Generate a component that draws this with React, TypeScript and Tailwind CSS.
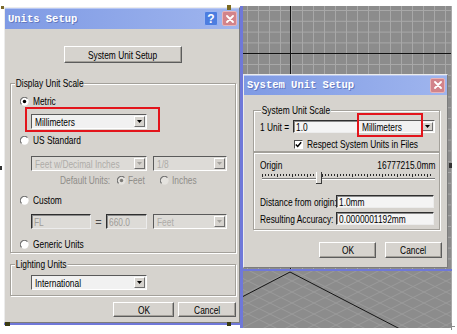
import React from "react";

const sans = "font-['Liberation_Sans',Arial,sans-serif]";

// the reference UI font is a condensed one; squeeze Liberation Sans to match
function T({ children, at = "l", className = "" }: { children: React.ReactNode; at?: "l" | "c" | "r"; className?: string }) {
  const origin = at === "c" ? "origin-center" : at === "r" ? "origin-right" : "origin-left";
  return <span className={`inline-block scale-x-[0.76] whitespace-nowrap ${origin} ${className}`}>{children}</span>;
}

function Radio({ on = false, off = false }: { on?: boolean; off?: boolean }) {
  return (
    <svg width="9" height="9" viewBox="0 0 12 12" className="shrink-0">
      <circle cx="6" cy="6" r="5.5" fill={off ? "#e4e2de" : "#ffffff"} />
      <path d="M9.9 2.1A5.5 5.5 0 0 0 2.1 9.9" fill="none" stroke="#6f6f6f" strokeWidth="1.6" />
      {on && <circle cx="6" cy="6" r="2.3" fill={off ? "#7d7b77" : "#000000"} />}
    </svg>
  );
}

function Arrow({ off = false }: { off?: boolean }) {
  return (
    <div className="flex w-[11px] shrink-0 items-center justify-center border border-t-white border-l-white border-r-[#6e6e6e] border-b-[#6e6e6e] bg-[#d6d3ce]">
      <svg width="5" height="3" viewBox="0 0 5 3">
        <path d="M0 0H5L2.5 3Z" fill={off ? "#a3a19d" : "#000000"} />
      </svg>
    </div>
  );
}

function Combo({ value, className = "", off = false }: { value: string; className?: string; off?: boolean }) {
  return (
    <div
      className={`flex border border-t-[#5a5a5a] border-l-[#5a5a5a] border-r-white border-b-white p-px ${
        off ? "bg-[#dddbd7] text-[#aeaca8]" : "bg-[#f1f1f1] text-black"
      } ${className}`}
    >
      <span className="flex min-w-0 flex-1 items-center overflow-hidden pl-[2px]">
        <T>{value}</T>
      </span>
      <Arrow off={off} />
    </div>
  );
}

function Field({ value, className = "", off = false }: { value: string; className?: string; off?: boolean }) {
  return (
    <div
      className={`flex items-center overflow-hidden border border-t-[#2e2e2e] border-l-[#2e2e2e] border-r-[#ececec] border-b-[#ececec] pl-[2px] shadow-[inset_1px_1px_0_#8a8a8a] ${
        off ? "bg-[#dddbd7] text-[#9d9b97]" : "bg-[#f4f4f4] text-black"
      } ${className}`}
    >
      <T>{value}</T>
    </div>
  );
}

function Btn({ children, className = "" }: { children: React.ReactNode; className?: string }) {
  return (
    <div
      className={`flex items-center justify-center border border-t-white border-l-white border-r-[#5c5c5c] border-b-[#5c5c5c] bg-[#d6d3ce] shadow-[inset_-1px_-1px_0_#a4a19b] ${className}`}
    >
      <T at="c">{children}</T>
    </div>
  );
}

function Group({
  label,
  labelLeft = "left-[4px]",
  className = "",
  children,
}: {
  label?: string;
  labelLeft?: string;
  className?: string;
  children?: React.ReactNode;
}) {
  return (
    <div className={`relative flex flex-col border border-[#a3a09a] shadow-[inset_1px_1px_0_#fff,1px_1px_0_#fff] ${className}`}>
      {label && (
        <span className={`absolute top-[-7px] leading-[12px] ${labelLeft}`}>
          <T className="bg-[#d6d3ce] px-px">{label}</T>
        </span>
      )}
      {children}
    </div>
  );
}

function CloseX() {
  return (
    <svg width="8" height="8" viewBox="0 0 8 8">
      <path d="M1 1L7 7M7 1L1 7" stroke="#ffffff" strokeWidth="1.8" strokeLinecap="round" />
    </svg>
  );
}

function TitleBar({ title, help = false, className = "" }: { title: string; help?: boolean; className?: string }) {
  return (
    <div
      className={`flex shrink-0 items-center bg-gradient-to-r from-[#7f9ae4] to-[#9fb5ee] pl-[3px] pr-[2px] shadow-[inset_0_1px_0_#b8c8f4] ${className}`}
    >
      <span className="flex-1 font-['Liberation_Mono',monospace] text-[10.5px] font-bold text-white [text-shadow:1px_1px_0_#6479c0]">
        {title}
      </span>
      {help && (
        <div className="mr-[4px] flex h-[15px] w-[14px] items-center justify-center rounded-[2px] border border-[#9ab4f2] bg-[#4c7de0] text-[12px] leading-none font-bold text-white">
          ?
        </div>
      )}
      <div className="flex h-[15px] w-[15px] items-center justify-center rounded-[2px] border border-[#e8b4b8] bg-[#d2838a]">
        <CloseX />
      </div>
    </div>
  );
}

function Viewport() {
  const vx = Array.from({ length: 20 }, (_, i) => 247 + i * 11);
  const hy = Array.from({ length: 25 }, (_, i) => 10.5 + i * 10.8);
  const diag = Array.from({ length: 16 }, (_, i) => 150 + i * 22);
  return (
    <svg className="absolute left-0 top-0" width="457" height="334" viewBox="0 0 457 334">
      <defs>
        <clipPath id="vtop">
          <rect x="243" y="6" width="209" height="263" />
        </clipPath>
        <clipPath id="vbot">
          <rect x="243" y="271" width="209" height="57" />
        </clipPath>
      </defs>
      <rect x="240" y="6" width="212" height="322" fill="#8c8c8c" />
      <g clipPath="url(#vtop)" stroke="#a8a8a8" strokeWidth="1">
        {vx.map((x) => (
          <line key={x} x1={x + 0.5} y1="6" x2={x + 0.5} y2="269" />
        ))}
        {hy.map((y) => (
          <line key={y} x1="243" y1={y} x2="452" y2={y} />
        ))}
        <line x1="290.5" y1="6" x2="290.5" y2="269" stroke="#111111" />
        <line x1="243" y1="53.5" x2="452" y2="53.5" stroke="#111111" />
      </g>
      <g clipPath="url(#vbot)" stroke="#9a9a9a" strokeWidth="1">
        {diag.map((x) => (
          <line key={"a" + x} x1={x} y1="330" x2={x + 130} y2="265" />
        ))}
        {diag.map((x) => (
          <line key={"b" + x} x1={x} y1="265" x2={x + 130} y2="330" />
        ))}
        <polyline points="242,297 290,272 400,329" fill="none" stroke="#151515" />
      </g>
      <rect x="451" y="6" width="1" height="322" fill="#a8a8a8" />
      <rect x="240" y="6" width="3" height="322" fill="#6f78d9" />
      <rect x="240" y="269" width="212" height="2" fill="#6f78d9" />
      <rect x="4" y="323" width="239" height="2" fill="#6f78d9" />
    </svg>
  );
}

function Marks() {
  return (
    <svg className="pointer-events-none absolute left-0 top-0" width="457" height="334" viewBox="0 0 457 334">
      <rect x="1" y="6" width="3" height="3" fill="#7b6a2a" />
      <rect x="227" y="5" width="4" height="5" fill="#7a6a20" />
      <rect x="5" y="322" width="5" height="4" fill="#3a3a12" />
      <rect x="227" y="322" width="4" height="4" fill="#3a3a12" />
      <rect x="0" y="166" width="2" height="4" fill="#333333" />
      <rect x="449" y="163" width="3" height="5" fill="#333333" />
      <path d="M448 326.5H455M451.5 323V330" stroke="#8c8c8c" strokeWidth="1" />
    </svg>
  );
}

function RadioRow({ label, on = false, className = "" }: { label: string; on?: boolean; className?: string }) {
  return (
    <div className={`ml-[9px] flex h-[12px] items-center gap-[4px] ${className}`}>
      <Radio on={on} />
      <T>{label}</T>
    </div>
  );
}

function UnitsSetup() {
  return (
    <div className="absolute left-[4px] top-[7px] flex h-[316px] w-[236px] flex-col border border-t-[#ececec] border-l-[#ececec] border-r-[#7c7c7c] border-b-[#7c7c7c] bg-[#d6d3ce]">
      <TitleBar title="Units Setup" help className="h-[21px]" />
      <div className="flex flex-col pl-[5px]">
        <Btn className="ml-[54px] mt-[17px] h-[17px] w-[118px]">System Unit Setup</Btn>

        <Group label="Display Unit Scale" className="mt-[20px] h-[170px] w-[226px]">
          <RadioRow label="Metric" on className="mt-[11px]" />
          <div className="ml-[14px] h-[25px] w-[135px] border-2 border-[#e3141b] pl-[4px] pt-[5px]">
            <Combo value="Millimeters" className="h-[15px] w-[116px]" />
          </div>
          <RadioRow label="US Standard" className="mt-[2px]" />
          <div className="ml-[20px] mt-[10px] flex gap-[6px]">
            <Combo off value="Feet w/Decimal Inches" className="h-[15px] w-[116px]" />
            <Combo off value="1/8" className="h-[15px] w-[74px]" />
          </div>
          <div className="ml-[49px] mt-[3px] flex h-[12px] items-center text-[#8f8d89]">
            <span className="w-[57px]">
              <T>Default Units:</T>
            </span>
            <Radio on off />
            <span className="ml-[2px] w-[32px]">
              <T>Feet</T>
            </span>
            <Radio off />
            <span className="ml-[3px]">
              <T>Inches</T>
            </span>
          </div>
          <RadioRow label="Custom" className="mt-[8px]" />
          <div className="ml-[20px] mt-[8px] flex h-[15px] items-center">
            <Field off value="FL" className="h-[15px] w-[60px]" />
            <span className="w-[15px] text-center text-[#4a4a4a]">=</span>
            <Field off value="660.0" className="h-[15px] w-[41px]" />
            <Combo off value="Feet" className="ml-[6px] h-[15px] w-[74px]" />
          </div>
          <RadioRow label="Generic Units" className="mt-[9px]" />
        </Group>

        <Group label="Lighting Units" className="mt-[11px] h-[32px] w-[226px]">
          <Combo value="International" className="ml-[20px] mt-[10px] h-[15px] w-[116px]" />
        </Group>

        <div className="mt-[6px] flex">
          <Btn className="ml-[103px] h-[15px] w-[61px]">OK</Btn>
          <Btn className="ml-[4px] h-[15px] w-[58px]">Cancel</Btn>
        </div>
      </div>
    </div>
  );
}

function Slider() {
  const dots = Array.from({ length: 57 }, (_, i) => i * 3);
  return (
    <svg width="173" height="12" viewBox="0 0 173 12" className="ml-[8px] mt-px">
      {dots.map((x) => (
        <rect key={x} x={x} y="2" width="1" height={x % 15 === 0 ? 3 : 2} fill="#2a2a2a" />
      ))}
      <rect x="0" y="6" width="173" height="1" fill="#7a7a7a" />
      <rect x="0" y="7" width="173" height="1" fill="#ffffff" />
      <rect x="54" y="0" width="6" height="12" fill="#d6d3ce" />
      <rect x="54" y="0" width="1" height="12" fill="#ffffff" />
      <rect x="59" y="0" width="1" height="12" fill="#3a3a3a" />
      <rect x="54" y="11" width="6" height="1" fill="#3a3a3a" />
    </svg>
  );
}

function Check() {
  return (
    <div className="flex h-[9px] w-[9px] shrink-0 items-center justify-center border border-t-[#4a4a4a] border-l-[#4a4a4a] border-r-white border-b-white bg-white">
      <svg width="7" height="7" viewBox="0 0 7 7">
        <path d="M0.8 3.4L2.7 5.4L6.2 1.2" fill="none" stroke="#000000" strokeWidth="1.5" />
      </svg>
    </div>
  );
}

function SystemUnitSetup() {
  return (
    <div className="absolute left-[243px] top-[74px] flex h-[194px] w-[205px] flex-col border border-t-[#ececec] border-l-[#ececec] border-r-[#7c7c7c] border-b-[#7c7c7c] bg-[#d6d3ce]">
      <TitleBar title="System Unit Setup" className="h-[20px]" />
      <div className="flex flex-col pl-[9px]">
        <Group label="System Unit Scale" labelLeft="left-[7px]" className="mt-[15px] h-[42px] w-[187px]">
          <div className="mt-[9px] flex h-[13px] items-center">
            <span className="w-[39px] pl-[6px]">
              <T>1 Unit =</T>
            </span>
            <Field value="1.0" className="h-[13px] w-[65px]" />
            <Combo value="Millimeters" className="h-[13px] w-[77px]" />
          </div>
          <div className="ml-[40px] mt-[6px] flex h-[10px] items-center gap-[4px]">
            <Check />
            <T>Respect System Units in Files</T>
          </div>
        </Group>
        <Group className="h-[78px] w-[187px]">
          <div className="mt-[6px] flex h-[12px] items-center justify-between pl-[6px] pr-[4px]">
            <T>Origin</T>
            <T at="r">16777215.0mm</T>
          </div>
          <Slider />
          <div className="mt-[11px] flex h-[13px] items-center">
            <span className="w-[82px] pl-[6px]">
              <T>Distance from origin:</T>
            </span>
            <Field value="1.0mm" className="h-[13px] w-[98px]" />
          </div>
          <div className="mt-[4px] flex h-[13px] items-center">
            <span className="w-[82px] pl-[6px]">
              <T>Resulting Accuracy:</T>
            </span>
            <Field value="0.0000001192mm" className="h-[13px] w-[98px]" />
          </div>
        </Group>
        <div className="mt-[12px] flex">
          <Btn className="ml-[66px] h-[16px] w-[57px]">OK</Btn>
          <Btn className="ml-[9px] h-[16px] w-[57px]">Cancel</Btn>
        </div>
      </div>
      <div className="absolute left-[113px] top-[38px] h-[24px] w-[66px] border-2 border-[#e3141b]" />
    </div>
  );
}

export default function App() {
  return (
    <div className={`relative h-[334px] w-[457px] overflow-hidden bg-white text-[11px] leading-[12px] text-black ${sans}`}>
      <Viewport />
      <UnitsSetup />
      <SystemUnitSetup />
      <Marks />
    </div>
  );
}
